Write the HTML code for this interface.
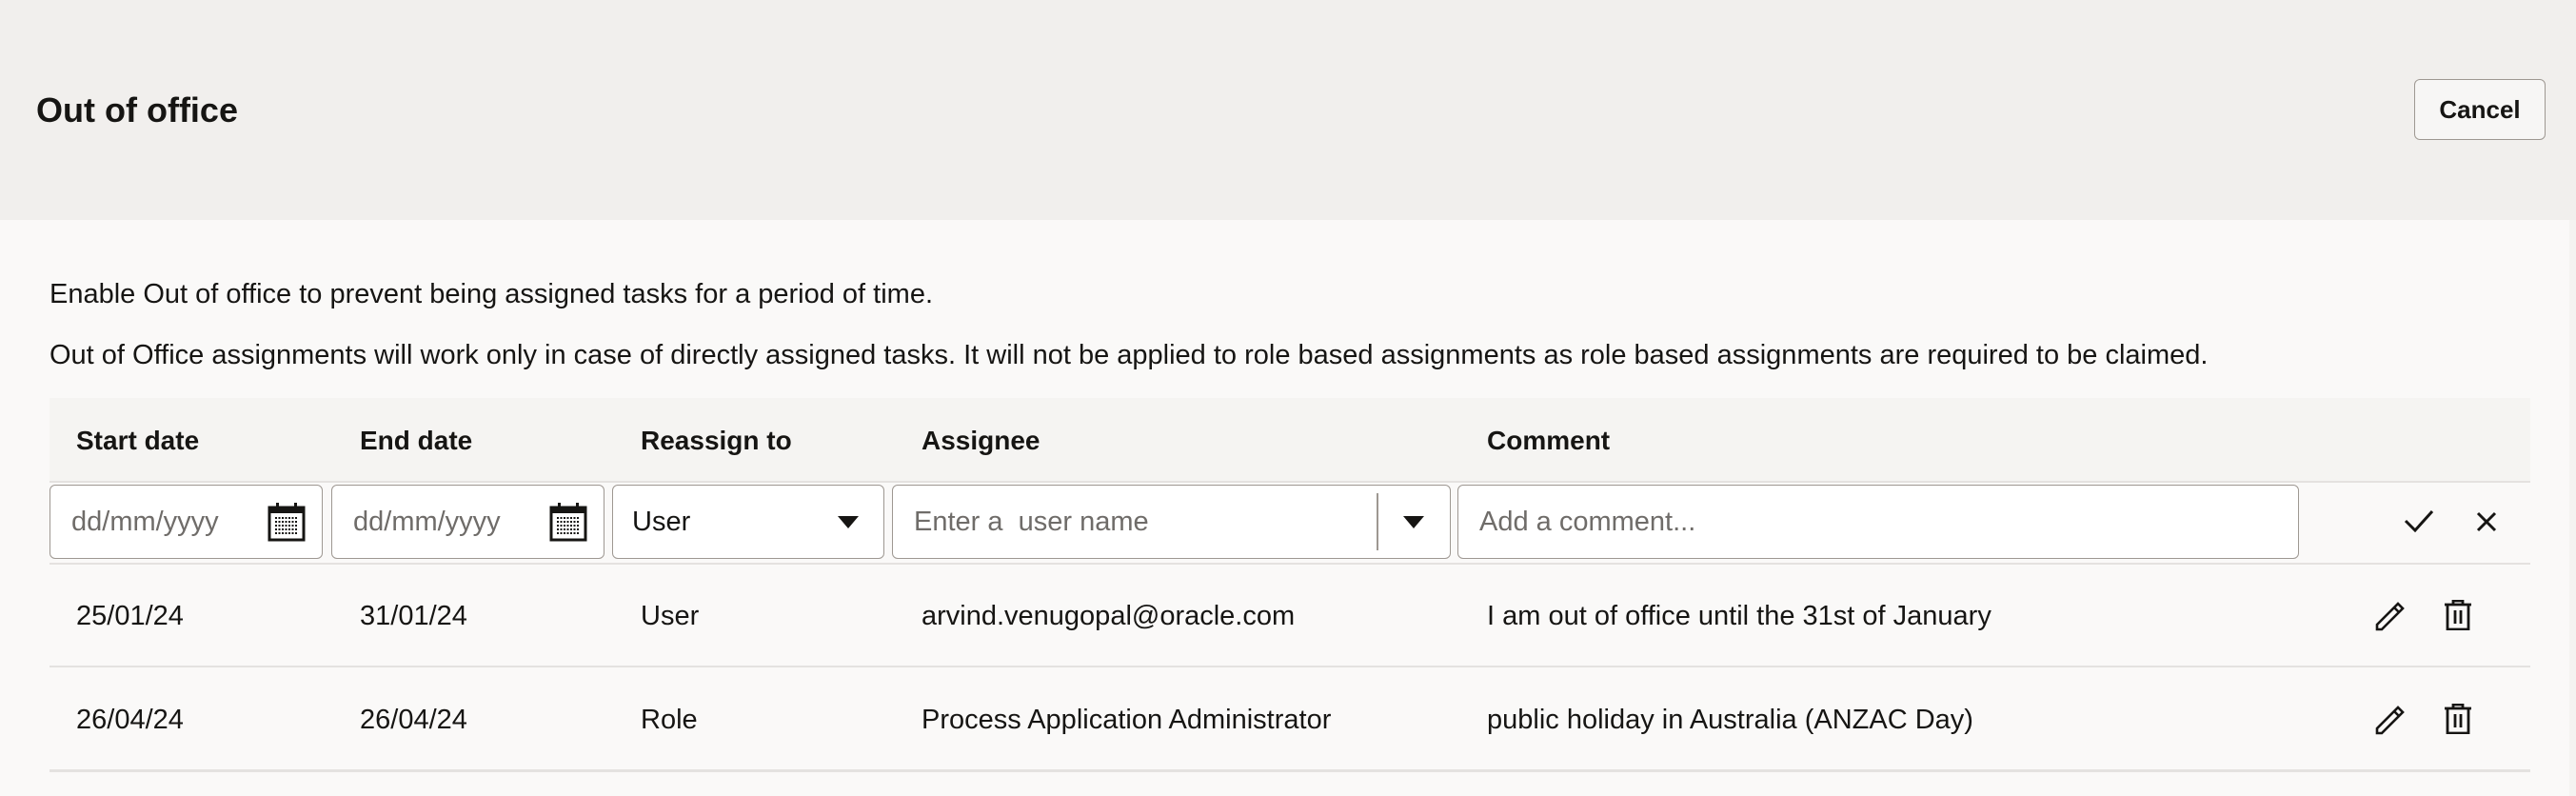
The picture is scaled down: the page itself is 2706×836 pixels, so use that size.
<!DOCTYPE html>
<html><head><meta charset="utf-8">
<style>
*{box-sizing:border-box;margin:0;padding:0}
body{width:2706px;height:836px;background:#faf9f8;font-family:"Liberation Sans",sans-serif;color:#161513;position:relative;overflow:hidden}
.top{position:absolute;left:0;top:0;width:2706px;height:231px;background:#f1efed}
.title{position:absolute;left:38px;top:94px;font-size:36px;font-weight:bold;line-height:44px}
.cancel{position:absolute;left:2536px;top:83px;width:138px;height:64px;border:1px solid #9e9892;border-radius:6px;background:#f7f6f5;font-size:26px;font-weight:bold;text-align:center;line-height:62px}
.p{position:absolute;left:52px;font-size:29px;line-height:34px}
.a{position:absolute;font-size:29px;line-height:34px;white-space:nowrap}
.b{font-weight:bold;font-size:28px}
.hrow{position:absolute;left:52px;top:418px;width:2606px;height:88px;background:#f5f4f2}
.line{position:absolute;left:52px;width:2606px;height:2px;background:#e4e2e0}
.in{position:absolute;top:509px;height:78px;background:#fff;border:1.5px solid #9e9892;border-radius:6px}
.ph{color:#6f6c69}
.sb{position:absolute;right:0;top:231px;width:7px;height:605px;background:#f4f3f1}
</style></head><body>
<div class="top"></div>
<div class="title">Out of office</div>
<div class="cancel">Cancel</div>
<div class="p" style="top:292px">Enable Out of office to prevent being assigned tasks for a period of time.</div>
<div class="p" style="top:356px">Out of Office assignments will work only in case of directly assigned tasks. It will not be applied to role based assignments as role based assignments are required to be claimed.</div>
<div class="hrow"></div>
<div class="a b" style="left:80px;top:446px">Start date</div>
<div class="a b" style="left:378px;top:446px">End date</div>
<div class="a b" style="left:673px;top:446px">Reassign to</div>
<div class="a b" style="left:968px;top:446px">Assignee</div>
<div class="a b" style="left:1562px;top:446px">Comment</div>
<div class="line" style="top:505px"></div>

<div class="in" style="left:52px;width:287px"><span class="a ph" style="left:22px;top:21px;width:160px;overflow:hidden">dd/mm/yyyy</span>
<svg style="position:absolute;left:228px;top:17px" width="40" height="42" viewBox="0 0 40 42"><rect x="2" y="6" width="36" height="34" fill="none" stroke="#161513" stroke-width="3"/><rect x="2" y="6" width="36" height="6" fill="#161513"/><rect x="9" y="1" width="3" height="9" fill="#161513"/><rect x="28" y="1" width="3" height="9" fill="#161513"/><path d="M8 17h24M8 21h24M8 25h24M8 29h24M8 33h24" stroke="#161513" stroke-width="2" stroke-dasharray="2 1.5"/></svg></div>
<div class="in" style="left:348px;width:287px"><span class="a ph" style="left:22px;top:21px;width:160px;overflow:hidden">dd/mm/yyyy</span>
<svg style="position:absolute;left:228px;top:17px" width="40" height="42" viewBox="0 0 40 42"><rect x="2" y="6" width="36" height="34" fill="none" stroke="#161513" stroke-width="3"/><rect x="2" y="6" width="36" height="6" fill="#161513"/><rect x="9" y="1" width="3" height="9" fill="#161513"/><rect x="28" y="1" width="3" height="9" fill="#161513"/><path d="M8 17h24M8 21h24M8 25h24M8 29h24M8 33h24" stroke="#161513" stroke-width="2" stroke-dasharray="2 1.5"/></svg></div>
<div class="in" style="left:643px;width:286px"><span class="a" style="left:20px;top:21px">User</span>
<svg style="position:absolute;left:236px;top:32px" width="22" height="14"><path d="M0 0h22L11 13z" fill="#161513"/></svg></div>
<div class="in" style="left:937px;width:587px"><span class="a ph" style="left:22px;top:21px">Enter a&nbsp; user name</span>
<div style="position:absolute;left:508px;top:8px;width:2px;height:60px;background:#9e9892"></div>
<svg style="position:absolute;left:536px;top:32px" width="22" height="14"><path d="M0 0h22L11 13z" fill="#161513"/></svg></div>
<div class="in" style="left:1531px;width:884px"><span class="a ph" style="left:22px;top:21px">Add a comment...</span></div>
<svg style="position:absolute;left:2525px;top:535px" width="32" height="24"><path d="M2 12l10 10L30 2" fill="none" stroke="#161513" stroke-width="3"/></svg>
<svg style="position:absolute;left:2601px;top:537px" width="22" height="22"><path d="M2 2l18 18M20 2L2 20" stroke="#161513" stroke-width="3"/></svg>
<div class="line" style="top:591px"></div>

<div class="a" style="left:80px;top:630px">25/01/24</div>
<div class="a" style="left:378px;top:630px">31/01/24</div>
<div class="a" style="left:673px;top:630px">User</div>
<div class="a" style="left:968px;top:630px">arvind.venugopal@oracle.com</div>
<div class="a" style="left:1562px;top:630px">I am out of office until the 31st of January</div>
<div class="line" style="top:699px"></div>
<div class="a" style="left:80px;top:739px">26/04/24</div>
<div class="a" style="left:378px;top:739px">26/04/24</div>
<div class="a" style="left:673px;top:739px">Role</div>
<div class="a" style="left:968px;top:739px">Process Application Administrator</div>
<div class="a" style="left:1562px;top:739px">public holiday in Australia (ANZAC Day)</div>
<div class="line" style="top:808px;height:3px"></div>

<svg style="position:absolute;left:2495px;top:631px" width="32" height="32" viewBox="0 0 32 32"><path d="M2 30v-5L24 3l5 5L7 30z M20 7l5 5" fill="none" stroke="#161513" stroke-width="2.6"/></svg>
<svg style="position:absolute;left:2567px;top:630px" width="30" height="32" viewBox="0 0 30 32"><path d="M1 5h28M10 5V1h10v4M4 5v26h22V5M12 11v14M18 11v14" fill="none" stroke="#161513" stroke-width="2.8"/></svg>
<svg style="position:absolute;left:2495px;top:740px" width="32" height="32" viewBox="0 0 32 32"><path d="M2 30v-5L24 3l5 5L7 30z M20 7l5 5" fill="none" stroke="#161513" stroke-width="2.6"/></svg>
<svg style="position:absolute;left:2567px;top:739px" width="30" height="32" viewBox="0 0 30 32"><path d="M1 5h28M10 5V1h10v4M4 5v26h22V5M12 11v14M18 11v14" fill="none" stroke="#161513" stroke-width="2.8"/></svg>
<div class="sb"></div>
</body></html>
